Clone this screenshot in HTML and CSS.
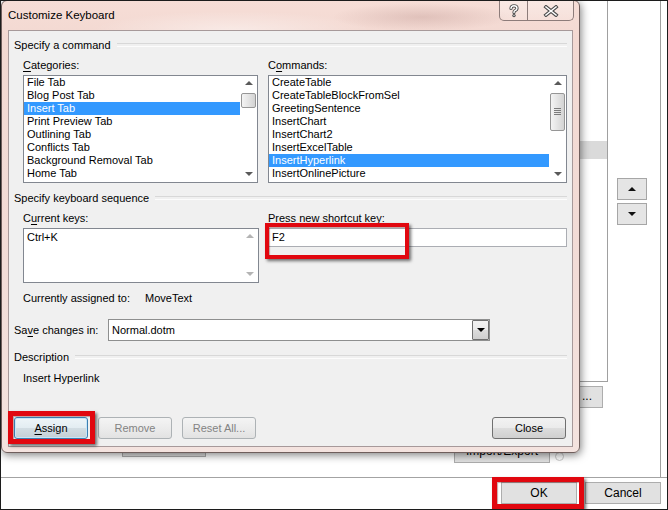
FILE: index.html
```html
<!DOCTYPE html>
<html>
<head>
<meta charset="utf-8">
<link rel="stylesheet" href="styles.css">
</head>
<body>
<div class="screen">
  <div class="bgwin">
    <div class="bg-top">
      <div class="bg-content">
        <div class="bg-left">
          <div class="bg-list"><div class="bg-sel"></div></div>
          <div class="bg-row1"><span class="bg-btn ell">...</span></div>
          <div class="bg-row2">
            <span class="bg-btn b1"></span>
            <span class="bg-btn ie">Import/Export</span>
            <span class="bg-info"></span>
          </div>
        </div>
        <div class="bg-side">
          <span class="arrow-btn"><span class="tri-up dark"></span></span>
          <span class="arrow-btn"><span class="tri-down dark"></span></span>
        </div>
      </div>
    </div>
    <div class="bg-bottom">
      <span class="mark mark-ok"><span class="wbtn">OK</span></span>
      <span class="wbtn">Cancel</span>
    </div>
  </div>

  <div class="dialog">
    <div class="titlebar">
      <span class="title">Customize Keyboard</span>
      <div class="caption-btns">
        <span class="cbtn help">
          <svg width="12" height="14" viewBox="0 0 12 14">
            <path d="M3 4.5 Q3 1.8 6 1.8 Q9 1.8 9 4.3 Q9 6 6.6 6.9 Q6 7.2 6 8.6" fill="none" stroke="#4c4c4c" stroke-width="3.2" stroke-linecap="round"/>
            <path d="M3 4.5 Q3 1.8 6 1.8 Q9 1.8 9 4.3 Q9 6 6.6 6.9 Q6 7.2 6 8.6" fill="none" stroke="#ffffff" stroke-width="1.4" stroke-linecap="round"/>
            <circle cx="6" cy="11.6" r="1.7" fill="#4c4c4c"/>
            <circle cx="6" cy="11.6" r="0.7" fill="#ffffff"/>
          </svg>
        </span>
        <span class="cbtn close">
          <svg width="16" height="12" viewBox="0 0 16 12">
            <path d="M3 2 L13 10 M13 2 L3 10" stroke="#4c4c4c" stroke-width="3.6" stroke-linecap="square"/>
            <path d="M3 2 L13 10 M13 2 L3 10" stroke="#ffffff" stroke-width="1.6" stroke-linecap="square"/>
          </svg>
        </span>
      </div>
    </div>

    <div class="client">
      <div class="group">Specify a command</div>
      <div class="cols">
        <div class="col-left">
          <div class="label"><u>C</u>ategories:</div>
          <div class="list">
            <div class="items">
              <div class="item">File Tab</div>
              <div class="item">Blog Post Tab</div>
              <div class="item sel">Insert Tab</div>
              <div class="item">Print Preview Tab</div>
              <div class="item">Outlining Tab</div>
              <div class="item">Conflicts Tab</div>
              <div class="item">Background Removal Tab</div>
              <div class="item">Home Tab</div>
            </div>
            <div class="vscroll">
              <span class="sarrow"><span class="tri-up"></span></span>
              <span class="thumb small"></span>
              <span class="sarrow bottom"><span class="tri-down"></span></span>
            </div>
          </div>
        </div>
        <div class="col-right">
          <div class="label">C<u>o</u>mmands:</div>
          <div class="list">
            <div class="items">
              <div class="item">CreateTable</div>
              <div class="item">CreateTableBlockFromSel</div>
              <div class="item">GreetingSentence</div>
              <div class="item">InsertChart</div>
              <div class="item">InsertChart2</div>
              <div class="item">InsertExcelTable</div>
              <div class="item sel">InsertHyperlink</div>
              <div class="item">InsertOnlinePicture</div>
            </div>
            <div class="vscroll">
              <span class="sarrow"><span class="tri-up"></span></span>
              <span class="thumb big"><span class="grip"></span></span>
              <span class="sarrow bottom"><span class="tri-down"></span></span>
            </div>
          </div>
        </div>
      </div>

      <div class="group g2">Specify keyboard sequence</div>
      <div class="cols">
        <div class="col-left">
          <div class="label">C<u>u</u>rrent keys:</div>
          <div class="list keys">
            <div class="items">
              <div class="item">Ctrl+K</div>
            </div>
            <div class="vscroll">
              <span class="sarrow"><span class="tri-up light"></span></span>
              <span class="sarrow bottom"><span class="tri-down light"></span></span>
            </div>
          </div>
        </div>
        <div class="col-right">
          <div class="label">Press <u>n</u>ew shortcut key:</div>
          <div class="mark mark-f2"><div class="textbox">F2</div></div>
        </div>
      </div>

      <div class="assigned"><span class="assigned-label">Currently assigned to:</span><span>MoveText</span></div>

      <div class="save-row">
        <span class="save-label">Sa<u>v</u>e changes in:</span>
        <div class="combo">
          <span class="combo-text">Normal.dotm</span>
          <span class="combo-btn"><span class="tri-down black"></span></span>
        </div>
      </div>

      <div class="group g3">Description</div>
      <div class="desc">Insert Hyperlink</div>

      <div class="btn-row">
        <span class="mark mark-assign"><span class="btn focused"><u>A</u>ssign</span></span>
        <span class="btn disabled">Remove</span>
        <span class="btn disabled">Reset All...</span>
        <span class="btn close-btn">Close</span>
      </div>
    </div>
  </div>
</div>
</body>
</html>
```

FILE: styles.css
```css
* { box-sizing: border-box; }
html, body { margin: 0; padding: 0; }
body {
  font-family: "Liberation Sans", Arial, sans-serif;
  font-size: 11px;
  color: #000;
  background: #fff;
}
u { text-decoration: underline; text-underline-offset: 2px; }

.screen {
  position: relative;
  width: 668px;
  height: 510px;
  border: 1px solid #1c1c1c;
  overflow: hidden;
  background: #fff;
}

/* ---------- background window ---------- */
.bg-top { height: 477px; border-bottom: 1px solid #a3a3a3; display: flex; }
.bg-content { width: 660px; border-right: 1px solid #a0a0a0; display: flex; }
.bg-left { width: 607px; display: flex; flex-direction: column; }
.bg-list {
  height: 381px;
  border-right: 1px solid #a0a0a0;
  border-bottom: 1px solid #a0a0a0;
  padding-top: 140px;
}
.bg-sel { height: 18px; background: #dadada; }
.bg-row1 { display: flex; padding-top: 4px; }
.bg-btn {
  display: block;
  border: 1px solid #adadad;
  background: #e1e1e1;
  text-align: center;
  font-size: 12px;
}
.ell { margin-left: 570px; width: 32px; height: 22px; line-height: 18px; }
.bg-row2 { display: flex; align-items: flex-start; }
.b1 { margin-left: 121px; margin-top: 26px; width: 84px; height: 23px; }
.ie { margin-left: 248px; margin-top: 32px; width: 96px; height: 23px; line-height: 21px; }
.bg-info {
  display: block;
  margin-left: 5px;
  margin-top: 44px;
  width: 9px; height: 9px;
  border: 1px solid #c8c8c8;
  border-radius: 50%;
}
.bg-side { display: flex; flex-direction: column; gap: 3px; padding-top: 177px; padding-left: 9px; }
.arrow-btn {
  width: 30px; height: 22px;
  border: 1px solid #a6a6a6;
  background: #e5e5e5;
  display: flex; align-items: center; justify-content: center;
}
.bg-bottom {
  display: flex;
  justify-content: flex-end;
  gap: 8px;
  padding: 4px 6px 0 0;
}
.wbtn {
  display: flex; align-items: center; justify-content: center;
  width: 76px; height: 22px;
  border: 1px solid #adadad;
  background: #e1e1e1;
  font-size: 12px;
}

/* ---------- triangles ---------- */
.tri-up, .tri-down { display: block; width: 0; height: 0; border-left: 4px solid transparent; border-right: 4px solid transparent; }
.tri-up { border-bottom: 4px solid #5a5a5a; }
.tri-down { border-top: 4px solid #5a5a5a; }
.tri-up.dark { border-bottom-color: #111; }
.tri-down.dark { border-top-color: #111; }
.tri-up.light { border-bottom-color: #b4b4b4; }
.tri-down.light { border-top-color: #b4b4b4; }
.tri-down.black { border-top-color: #000; }

/* ---------- dialog ---------- */
.dialog {
  position: absolute;
  left: 0;
  top: -1px;
  width: 579px;
  height: 453px;
  border: 1px solid #6f5e5c;
  border-radius: 6px;
  background:
    radial-gradient(ellipse 90px 14px at 420px 16px, rgba(150, 100, 95, 0.22), transparent),
    radial-gradient(ellipse 140px 20px at 230px 30px, rgba(255, 255, 255, 0.45), transparent),
    linear-gradient(180deg, #f6ddd6 0%, #f3d9d2 8%, #f2dcd7 60%, #f4e3df 100%);
  box-shadow: 1px 2px 9px rgba(0, 0, 0, 0.5);
  display: flex;
  flex-direction: column;
  padding: 0 6px 5px 6px;
}
.titlebar {
  height: 29px;
  display: flex;
  justify-content: space-between;
  align-items: flex-start;
}
.title { padding-top: 8px; font-size: 11.5px; color: #000; }
.caption-btns {
  display: flex;
  margin-top: 0;
  margin-right: -1px;
  height: 20px;
  border: 1px solid #8d7c7a;
  border-top: none;
  border-radius: 0 0 5px 5px;
  overflow: hidden;
  background: linear-gradient(180deg, rgba(255,255,255,0.35), rgba(255,255,255,0.15));
}
.cbtn { display: flex; align-items: center; justify-content: center; height: 19px; }
.help { width: 28px; border-right: 1px solid #8d7c7a; }
.close { width: 45px; }

.client {
  height: 418px;
  border: 1px solid #a7999a;
  background: #f0f0f0;
  padding: 7px 5px 7px 5px;
  display: flex;
  flex-direction: column;
}
.group {
  display: flex;
  align-items: center;
  height: 14px;
  line-height: 14px;
  white-space: nowrap;
}
.group::after {
  content: "";
  flex: 1;
  height: 2px;
  border-top: 1px solid #d8d8d8;
  border-bottom: 1px solid #fcfcfc;
  margin-left: 6px;
  margin-top: 1px;
}
.g2 { margin-top: 8px; }
.g3 { margin-top: 9px; }

.cols { display: flex; gap: 10px; padding-left: 9px; }
.col-left { width: 235px; }
.col-right { width: 299px; }
.label { height: 13px; line-height: 13px; margin-top: 7px; margin-bottom: 3px; white-space: nowrap; }

.list {
  height: 108px;
  border: 1px solid #828790;
  background: #fff;
  display: flex;
}
.list.keys { height: 55px; width: 236px; }
.items { flex: 1; }
.item { height: 13px; line-height: 13px; padding-left: 3px; white-space: nowrap; }
.item.sel { background: #3399ff; color: #fff; }
.keys .item { margin-top: 2px; }
.vscroll { width: 17px; display: flex; flex-direction: column; align-items: center; }
.sarrow { width: 17px; height: 15px; display: flex; align-items: center; justify-content: center; }
.sarrow.bottom { margin-top: auto; }
.thumb {
  display: flex; align-items: center; justify-content: center;
  width: 15px;
  margin-top: 2px;
  border: 1px solid #969696;
  border-radius: 2px;
  background: linear-gradient(90deg, #f4f4f4 0%, #e4e4e4 50%, #d3d3d3 100%);
}
.thumb.small { height: 15px; }
.thumb.big { height: 38px; }
.grip {
  width: 7px; height: 7px;
  background: repeating-linear-gradient(180deg, #7b7b7b 0 1px, transparent 1px 2px);
}

.textbox {
  height: 19px;
  border: 1px solid #abadb3;
  background: #fff;
  line-height: 17px;
  padding-left: 3px;
}

.mark { position: relative; display: block; }
.mark::after {
  content: "";
  position: absolute;
  border: 4px solid #e1070f;
  box-shadow: 2px 2px 3px rgba(0, 0, 0, 0.55), inset 1px 1px 1px rgba(90, 0, 0, 0.35);
}
.mark-f2::after { left: -3px; top: -5px; width: 136px; height: 28px; }
.mark-assign::after { left: -6px; top: -6px; right: -7px; bottom: -5px; border-width: 5px; }
.mark-ok::after { left: -9px; top: -5px; right: -7px; bottom: -5px; border-width: 5px; }

.assigned { margin-top: 9px; padding-left: 9px; height: 13px; line-height: 13px; display: flex; }
.assigned-label { width: 122px; }

.save-row { display: flex; align-items: center; margin-top: 14px; height: 22px; }
.save-label { width: 94px; }
.combo {
  width: 382px; height: 22px;
  border: 1px solid #8e8f8f;
  background: #fff;
  display: flex; align-items: center;
  padding: 0 0 0 3px;
}
.combo-text { flex: 1; }
.combo-btn {
  width: 17px; height: 20px;
  border: 1px solid #707070;
  border-radius: 1px;
  background: linear-gradient(180deg, #f2f2f2 0%, #ebebeb 50%, #dcdcdc 51%, #cfcfcf 100%);
  display: flex; align-items: center; justify-content: center;
}

.desc { margin-top: 8px; padding-left: 9px; height: 13px; line-height: 13px; }

.btn-row { margin-top: auto; display: flex; gap: 10px; }
.btn {
  display: flex; align-items: center; justify-content: center;
  width: 74px; height: 22px;
  border: 1px solid #707070;
  border-radius: 3px;
  background: linear-gradient(180deg, #f2f2f2 0%, #ebebeb 48%, #dddddd 52%, #cfcfcf 100%);
}
.btn.focused {
  border-color: #3c7fb1;
  box-shadow: inset 0 0 0 1px #c7e6f8;
  background: linear-gradient(180deg, #eef5f8 0%, #e3edf2 48%, #d2dde3 52%, #c4d0d6 100%);
}
.btn.disabled {
  color: #838383;
  border-color: #adb2b5;
  background: linear-gradient(180deg, #f4f4f4 0%, #ececec 50%, #e2e2e2 100%);
}
.close-btn { margin-left: auto; margin-right: 1px; }
```
